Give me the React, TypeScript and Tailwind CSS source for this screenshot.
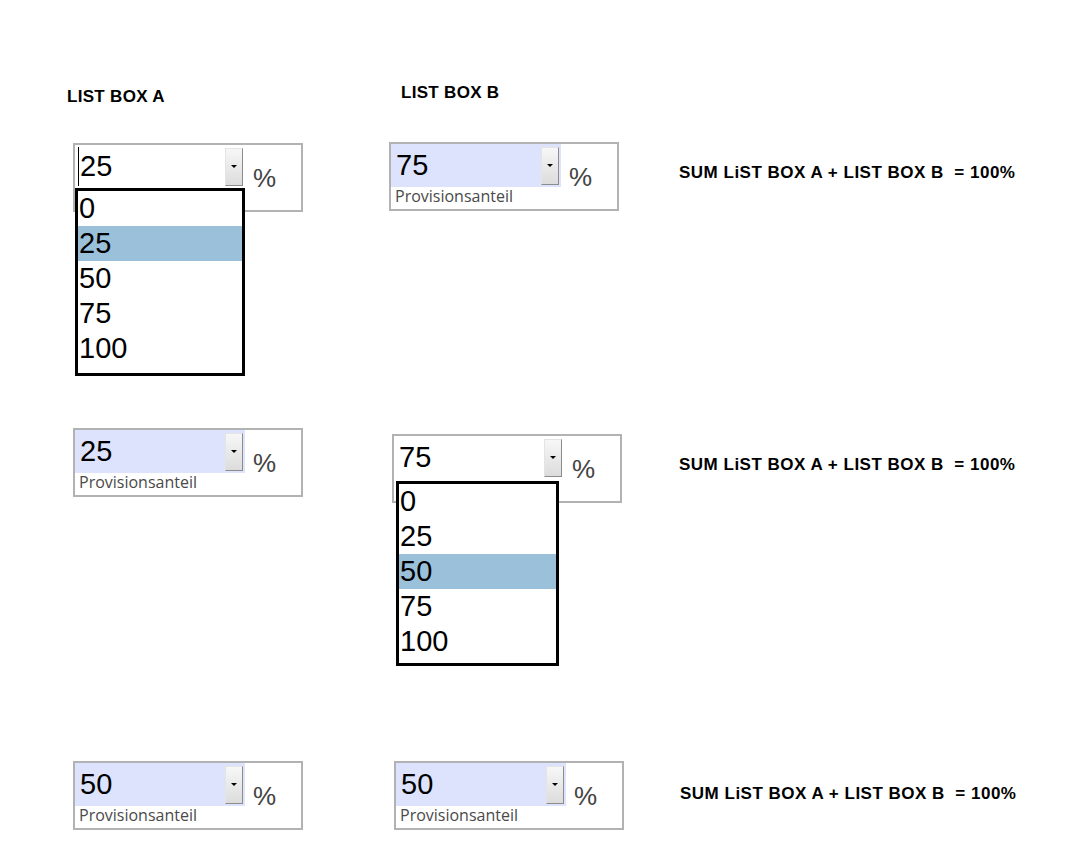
import React from 'react';

const options = ['0', '25', '50', '75', '100'];

const DropButton: React.FC = () => (
  <div className="w-[18px] h-[38px] mr-[2px] flex items-center justify-center bg-gradient-to-b from-[#f7f7f7] to-[#dcdcdc] border border-[#e4e4e4] border-r-[#8c8c8c] border-b-[#8c8c8c]">
    <div className="w-0 h-0 border-l-[3px] border-r-[3px] border-t-[3px] border-l-transparent border-r-transparent border-t-black" />
  </div>
);

const OpenList: React.FC<{ selected: string; className: string }> = ({ selected, className }) => (
  <div className={`absolute z-10 bg-white border-[3px] border-black ${className}`}>
    {options.map(o => (
      <div
        key={o}
        className={`h-[35px] leading-[35px] pl-[1px] text-[29px] text-black ${o === selected ? 'bg-[#9bc1da]' : ''}`}
      >
        {o}
      </div>
    ))}
  </div>
);

interface ListBoxProps {
  value: string;
  editing?: boolean;
  caret?: boolean;
  list?: React.ReactNode;
  className?: string;
}

const ListBox: React.FC<ListBoxProps> = ({ value, editing, caret, list, className = '' }) => (
  <div className={`relative w-[230px] h-[69px] shrink-0 border-2 border-[#b2b2b2] bg-white ${className}`}>
    <div className="flex">
      <div className="w-[170px]">
        <div className={`h-[43px] flex items-center justify-between ${editing ? 'bg-white' : 'bg-[#dde3fc]'}`}>
          <div className="flex items-center pl-[5px]">
            {caret && <span className="w-px h-[39px] bg-black mr-[1px] -ml-[2px]" />}
            <span className="text-[29px] leading-none text-black">{value}</span>
          </div>
          <DropButton />
        </div>
        {!editing && (
          <div className="pl-[4px] text-[16px] leading-[18px] text-[#4a4a4a] font-['Open_Sans',sans-serif]">
            Provisionsanteil
          </div>
        )}
      </div>
      <div className="ml-[8px] mt-[20px] text-[26px] leading-none text-[#444]">%</div>
    </div>
    {list}
  </div>
);

const SumText: React.FC<{ className: string }> = ({ className }) => (
  <div className={`text-[17px] leading-[20px] font-bold tracking-[0.5px] text-black whitespace-pre ${className}`}>
    SUM LiST BOX A + LIST BOX B  = 100%
  </div>
);

export default function App() {
  return (
    <div className="w-[1071px] h-[868px] bg-white overflow-hidden font-['Liberation_Sans',Arial,sans-serif]">
      <div className="h-[142px] flex items-start pt-[83px]">
        <div className="ml-[67px] w-[334px] mt-[4px] text-[17px] leading-[20px] font-bold tracking-[0.3px] text-black">LIST BOX A</div>
        <div className="text-[17px] leading-[20px] font-bold tracking-[0.3px] text-black">LIST BOX B</div>
      </div>

      <div className="h-[286px] flex items-start">
        <ListBox
          value="25"
          editing
          caret
          className="ml-[73px] mt-[1px]"
          list={<OpenList selected="25" className="left-0 top-[43px] w-[170px] h-[188px]" />}
        />
        <ListBox value="75" className="ml-[86px]" />
        <SumText className="ml-[60px] mt-[21px]" />
      </div>

      <div className="h-[333px] flex items-start">
        <ListBox value="25" className="ml-[73px]" />
        <ListBox
          value="75"
          editing
          className="ml-[89px] mt-[6px]"
          list={<OpenList selected="50" className="left-[2px] top-[45px] w-[163px] h-[185px]" />}
        />
        <SumText className="ml-[57px] mt-[27px]" />
      </div>

      <div className="flex items-start">
        <ListBox value="50" className="ml-[73px]" />
        <ListBox value="50" className="ml-[91px]" />
        <SumText className="ml-[56px] mt-[23px]" />
      </div>
    </div>
  );
}
